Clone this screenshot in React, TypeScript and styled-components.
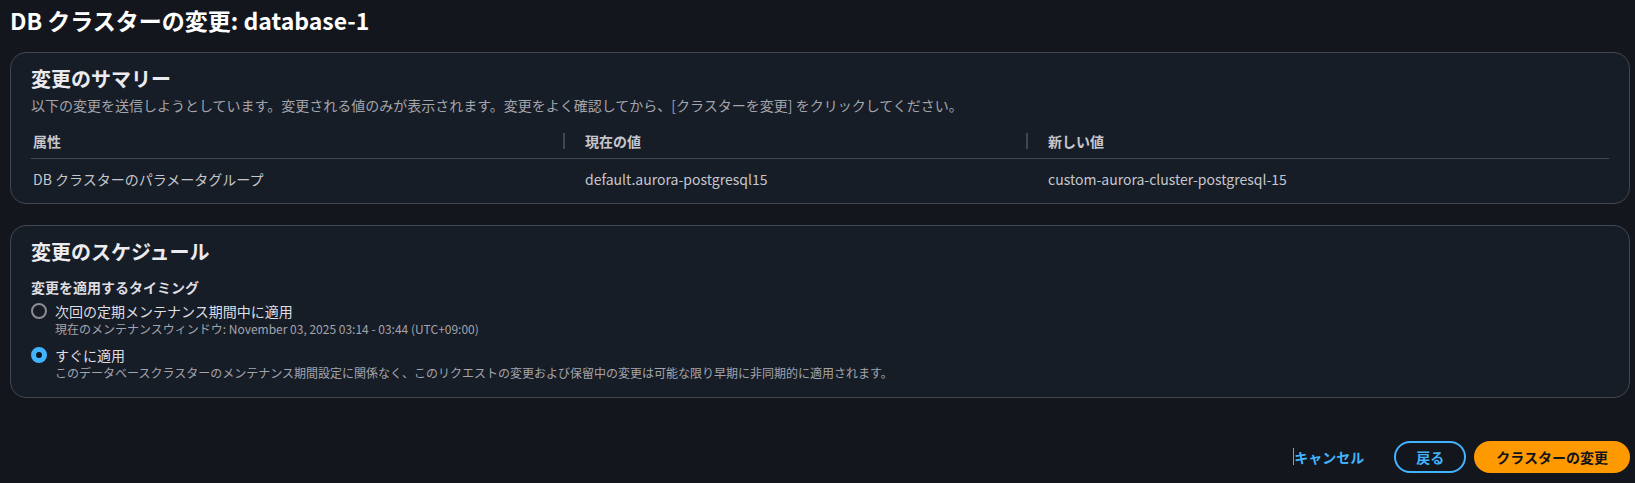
import React from "react";
import styled, { createGlobalStyle, css } from "styled-components";

const GlobalStyle = createGlobalStyle`
    html, body {
        margin: 0;
        padding: 0;
        background-color: #13171d;
    }
    body {
        font-family: "Noto Sans CJK JP", "Open Sans", sans-serif;
        font-size: 14px;
        line-height: 20px;
        color: #c6c6cd;
    }
`;

const Page = styled.div`
    padding: 5px 5px 0 10px;
`;

const Title = styled.h1`
    margin: 0 0 17px;
    font-size: 23px;
    line-height: 30px;
    font-weight: 700;
    color: #ffffff;
`;

const Container = styled.section`
    background-color: #161d26;
    border: 1px solid #424650;
    border-radius: 16px;
    padding: 14px 20px 4px;
    & + & {
        margin-top: 21px;
    }
`;

const SchedulePanel = styled(Container)`
    padding-bottom: 16px;
`;

const Heading = styled.h2`
    margin: 0;
    font-size: 20px;
    line-height: 24px;
    font-weight: 700;
    color: #ebebf0;
`;

const Description = styled.p`
    margin: 4px 0 0;
    color: #a4a4ad;
`;

const Table = styled.div`
    margin-top: 5px;
    display: grid;
    grid-template-columns: 532px 463px 1fr;
`;

const HeadCell = styled.div<{ $first?: boolean }>`
    position: relative;
    padding: 11px 0 7px ${p => (p.$first ? 2 : 22)}px;
    border-bottom: 1px solid #424650;
    font-weight: 700;
    color: #c6c6cd;
    ${p => !p.$first &&
        css`
            &::before {
                content: "";
                position: absolute;
                left: 0;
                top: 13px;
                width: 2px;
                height: 16px;
                background-color: #424650;
            }
        `}
`;

const BodyCell = styled.div<{ $first?: boolean }>`
    padding: 10px 0 10px ${p => (p.$first ? 2 : 22)}px;
    color: #c6c6cd;
`;

const FieldLabel = styled.div`
    margin-top: 13px;
    font-weight: 700;
    color: #dedee3;
`;

const RadioGroup = styled.div`
    margin-top: 4px;
    display: flex;
    flex-direction: column;
    gap: 8px;
`;

const RadioRow = styled.label`
    display: grid;
    grid-template-columns: 16px 1fr;
    column-gap: 8px;
    align-items: start;
`;

const RadioCircle = styled.span<{ $checked?: boolean }>`
    box-sizing: border-box;
    width: 16px;
    height: 16px;
    margin-top: 2px;
    border-radius: 50%;
    border: 2px solid #8c8c94;
    background-color: transparent;
    ${p => p.$checked &&
        css`
            border: 5px solid #42b4ff;
            background-color: #0f141a;
        `}
`;

const RadioText = styled.div`
    display: flex;
    flex-direction: column;
`;

const RadioLabel = styled.span`
    color: #dedee3;
`;

const RadioDescription = styled.span`
    font-size: 12px;
    line-height: 16px;
    color: #a4a4ad;
`;

const Actions = styled.div`
    margin-top: 43px;
    display: flex;
    justify-content: flex-end;
    align-items: center;
    gap: 8px;
`;

const Button = styled.button<{ $variant: "link" | "normal" | "primary" }>`
    position: relative;
    box-sizing: border-box;
    height: 32px;
    padding: 4px 20px;
    border-radius: 20px;
    border: 2px solid transparent;
    font-family: inherit;
    font-size: 14px;
    line-height: 20px;
    font-weight: 700;
    cursor: pointer;
    background: transparent;
    color: #42b4ff;
    ${p => p.$variant === "link" &&
        css`
            &::before {
                content: "";
                position: absolute;
                left: 19px;
                top: 5px;
                width: 1px;
                height: 17px;
                background-color: #42b4ff;
            }
        `}
    ${p => p.$variant === "normal" &&
        css`
            border-color: #42b4ff;
        `}
    ${p => p.$variant === "primary" &&
        css`
            background-color: #ff9900;
            border-color: #ff9900;
            color: #0f141a;
        `}
`;

export default function App() {
    return (
        <>
            <GlobalStyle />
            <Page>
                <Title>DB クラスターの変更: database-1</Title>

                <Container>
                    <Heading>変更のサマリー</Heading>
                    <Description>
                        以下の変更を送信しようとしています。変更される値のみが表示されます。変更をよく確認してから、[クラスターを変更] をクリックしてください。
                    </Description>
                    <Table>
                        <HeadCell $first>属性</HeadCell>
                        <HeadCell>現在の値</HeadCell>
                        <HeadCell>新しい値</HeadCell>
                        <BodyCell $first>DB クラスターのパラメータグループ</BodyCell>
                        <BodyCell>default.aurora-postgresql15</BodyCell>
                        <BodyCell>custom-aurora-cluster-postgresql-15</BodyCell>
                    </Table>
                </Container>

                <SchedulePanel>
                    <Heading>変更のスケジュール</Heading>
                    <FieldLabel>変更を適用するタイミング</FieldLabel>
                    <RadioGroup>
                        <RadioRow>
                            <RadioCircle />
                            <RadioText>
                                <RadioLabel>次回の定期メンテナンス期間中に適用</RadioLabel>
                                <RadioDescription>
                                    現在のメンテナンスウィンドウ: November 03, 2025 03:14 - 03:44 (UTC+09:00)
                                </RadioDescription>
                            </RadioText>
                        </RadioRow>
                        <RadioRow>
                            <RadioCircle $checked />
                            <RadioText>
                                <RadioLabel>すぐに適用</RadioLabel>
                                <RadioDescription>
                                    このデータベースクラスターのメンテナンス期間設定に関係なく、このリクエストの変更および保留中の変更は可能な限り早期に非同期的に適用されます。
                                </RadioDescription>
                            </RadioText>
                        </RadioRow>
                    </RadioGroup>
                </SchedulePanel>

                <Actions>
                    <Button $variant="link">キャンセル</Button>
                    <Button $variant="normal">戻る</Button>
                    <Button $variant="primary">クラスターの変更</Button>
                </Actions>
            </Page>
        </>
    );
}
